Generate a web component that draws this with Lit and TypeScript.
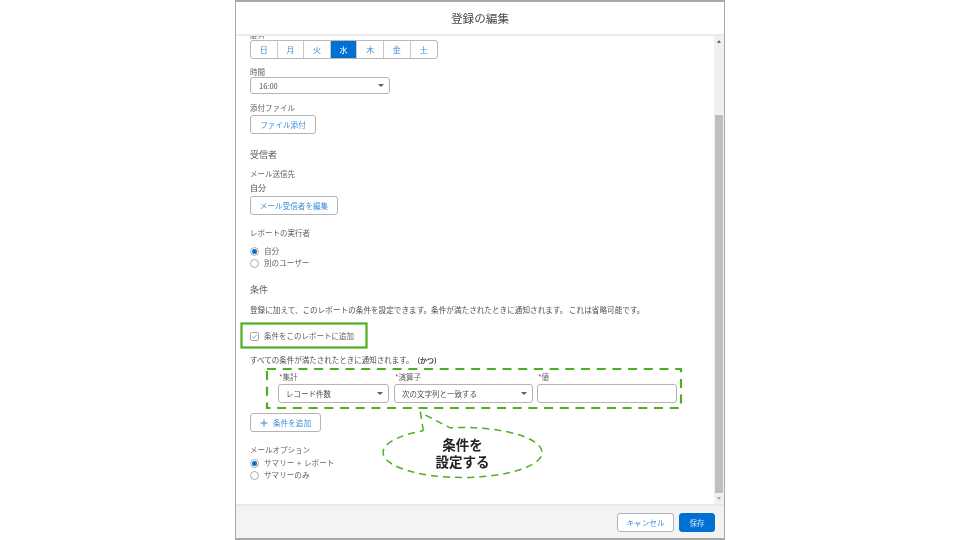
import { LitElement, html, css, svg } from "lit";
import { customElement } from "lit/decorators.js";

@customElement("app-root")
export class AppRoot extends LitElement {
  static styles = css`
    :host { display: block; width: 960px; height: 540px; background: #fff; position: relative; overflow: hidden;
      font-family: "Noto Sans CJK JP", "Noto Sans", sans-serif; color: #3e3e3c; filter: blur(0.3px); }
    * { box-sizing: border-box; }
    .page { height: 540px; display: flex; justify-content: center; }
    .modal { width: 490px; height: 540px; border: 1px solid #a8a8a8; border-top-width: 2px; border-bottom-width: 2px; display: flex; flex-direction: column; background: #fff; }
    .head { height: 34px; flex: none; border-bottom: 2px solid #ececec; display: flex; align-items: center; justify-content: center; font-size: 11.6px; color: #4a4a4a; }
    .main { flex: 1; min-height: 0; display: flex; }
    .content { flex: 1; padding: 0 0 0 14px; overflow: hidden; font-size: 7.5px; line-height: 12px; display: flex; flex-direction: column; align-items: flex-start; }
    .clip { height: 3px; overflow: hidden; font-size: 7.5px; line-height: 1px; color: #777; }
    .days { display: flex; margin-top: 1px; height: 19px; border: 1px solid #b8b8b8; border-radius: 3px; overflow: hidden; }
    .day { width: 26.6px; display: flex; align-items: center; justify-content: center; color: #3b8fd8; border-right: 1px solid #c8c8c8; font-size: 8px; }
    .day:last-child { border-right: 0; }
    .day.on { background: #0070d2; color: #fff; }
    .lbl { color: #5f5f5f; font-size: 7.5px; line-height: 10px; }
    .sel { height: 17px; border: 1px solid #b4b4b4; border-radius: 3px; display: flex; align-items: center; justify-content: space-between; font-size: 7.5px; color: #4f4f4f; background: #fff; }
    .sel .caret { width: 0; height: 0; border-left: 3px solid transparent; border-right: 3px solid transparent; border-top: 3.5px solid #5a6070; }
    .time { width: 140px; padding: 0 5px 0 8px; }
    .btn { height: 19px; border: 1px solid #b4b4b4; border-radius: 3px; display: flex; align-items: center; justify-content: center; color: #3b8fd8; font-size: 7.6px; background: #fff; }
    .h { font-size: 9px; line-height: 12px; color: #5f5f5f; }
    .val { color: #4f4f4f; font-size: 8px; line-height: 12px; }
    .radio { display: flex; align-items: center; gap: 5px; height: 12px; color: #626262; font-size: 7.6px; word-spacing: 1px; }
    .dot { width: 9px; height: 9px; border-radius: 50%; border: 1px solid #aaa; background: #fff; display: flex; align-items: center; justify-content: center; }
    .dot.on::after { content: ""; width: 5px; height: 5px; border-radius: 50%; background: #0070d2; }
    .para { color: #4f4f4f; font-size: 7.62px; line-height: 12px; white-space: nowrap; }
    .check { display: flex; align-items: center; gap: 5px; color: #5f5f5f; font-size: 7.5px; height: 12px; }
    .box { width: 9px; height: 9px; border: 1px solid #aaa; border-radius: 2px; display: flex; align-items: center; justify-content: center; }
    .box svg { display: block; }
    .all { color: #4f4f4f; font-size: 7.5px; line-height: 12px; }
    .all b { font-size: 7px; color: #444; margin-left: 4px; }
    .cond { display: flex; padding-left: 28px; }
    .col { display: flex; flex-direction: column; gap: 3px; }
    .col .lbl { padding-left: 1px; font-size: 7.5px; line-height: 9px; }
    .req { color: #c23934; }
    .sel.c { height: 19px; padding: 0 5px 0 7px; }
    .add { gap: 5px; }
    .bar { width: 10px; flex: none; background: #f0f0f0; display: flex; flex-direction: column; align-items: center; justify-content: space-between; padding: 4px 0; position: relative; }
    .tri-u { width: 0; height: 0; border-left: 2.5px solid transparent; border-right: 2.5px solid transparent; border-bottom: 3px solid #666; }
    .tri-d { width: 0; height: 0; border-left: 2.5px solid transparent; border-right: 2.5px solid transparent; border-top: 3px solid #aaa; }
    .thumb { position: absolute; left: 1px; right: 1px; top: 79px; bottom: 11px; background: #bfbfbf; }
    .foot { height: 34px; flex: none; background: #f3f3f3; border-top: 2px solid #e8e8e8; display: flex; align-items: center; justify-content: flex-end; gap: 5px; padding-right: 9px; }
    .foot .btn { height: 19px; }
    .save { background: #0070d2; border-color: #0070d2; color: #cfe4f7; }
    .overlay { position: absolute; left: 0; top: 0; }
    .call { position: absolute; left: 402.5px; top: 436px; width: 120px; text-align: center; font-size: 13.5px; line-height: 17px; font-weight: 700; color: #222; }
  `;

  render() {
    const days = ["日", "月", "火", "水", "木", "金", "土"];
    return html`
      <div class="page"><div class="modal">
        <div class="head">登録の編集</div>
        <div class="main">
          <div class="content">
            <div class="clip">曜日</div>
            <div class="days">${days.map((d) => html`<div class="day ${d === "水" ? "on" : ""}">${d}</div>`)}</div>
            <div class="lbl" style="margin-top:8px">時間</div>
            <div class="sel time"><span>16:00</span><span class="caret"></span></div>
            <div class="lbl" style="margin-top:9px">添付ファイル</div>
            <div class="btn" style="width:66px;margin-top:2px">ファイル添付</div>
            <div class="h" style="margin-top:15px">受信者</div>
            <div class="lbl" style="margin-top:8px">メール送信先</div>
            <div class="val" style="margin-top:3px">自分</div>
            <div class="btn" style="width:88px;margin-top:2px">メール受信者を編集</div>
            <div class="lbl" style="margin-top:13px">レポートの実行者</div>
            <div class="radio" style="margin-top:7px"><span class="dot on"></span>自分</div>
            <div class="radio"><span class="dot"></span>別のユーザー</div>
            <div class="h" style="margin-top:15px">条件</div>
            <div class="para" style="margin-top:8px">登録に加えて、このレポートの条件を設定できます。条件が満たされたときに通知されます。 これは省略可能です。</div>
            <div class="check" style="margin-top:14px"><span class="box"><svg width="7" height="7" viewBox="0 0 7 7"><path d="M1.2 3.6 L2.8 5.2 L5.8 1.6" fill="none" stroke="#5a9fd8" stroke-width="0.9"/></svg></span>条件をこのレポートに追加</div>
            <div class="all" style="margin-top:12px">すべての条件が満たされたときに通知されます。<b>(かつ)</b></div>
            <div class="cond" style="margin-top:6px">
              <div class="col"><div class="lbl"><span class="req">*</span>集計</div><div class="sel c" style="width:111px;margin-right:5px"><span>レコード件数</span><span class="caret"></span></div></div>
              <div class="col"><div class="lbl"><span class="req">*</span>演算子</div><div class="sel c" style="width:139px;margin-right:4px"><span>次の文字列と一致する</span><span class="caret"></span></div></div>
              <div class="col"><div class="lbl"><span class="req">*</span>値</div><div class="sel c" style="width:140px"></div></div>
            </div>
            <div class="btn add" style="width:71px;margin-top:10px"><svg width="8" height="8" viewBox="0 0 8 8"><path d="M4 .5V7.5M.5 4H7.5" stroke="#3b8fd8" stroke-width="1.1" fill="none"/></svg><span>条件を追加</span></div>
            <div class="lbl" style="margin-top:13px">メールオプション</div>
            <div class="radio" style="margin-top:2px"><span class="dot on"></span>サマリー + レポート</div>
            <div class="radio"><span class="dot"></span>サマリーのみ</div>
          </div>
          <div class="bar"><span class="tri-u"></span><span class="thumb"></span><span class="tri-d"></span></div>
        </div>
        <div class="foot">
          <div class="btn" style="width:57px">キャンセル</div>
          <div class="btn save" style="width:36px">保存</div>
        </div>
      </div></div>
      <svg class="overlay" width="960" height="540" fill="none">
        ${svg`<rect x="241.5" y="323.5" width="125" height="24" stroke="#4fae24" stroke-width="2.2"/>
        <rect x="267" y="369" width="414" height="39" stroke="#4fae24" stroke-width="2.2" stroke-dasharray="9 6.7"/>
        <path d="M423.3 430.75 L420.5 412.5 L450 427.8 A79.5 25 0 1 1 423.3 430.75" fill="#fff" stroke="#4fae24" stroke-width="1.5" stroke-dasharray="7 5"/>`}
      </svg>
      <div class="call">条件を<br />設定する</div>
    `;
  }
}
